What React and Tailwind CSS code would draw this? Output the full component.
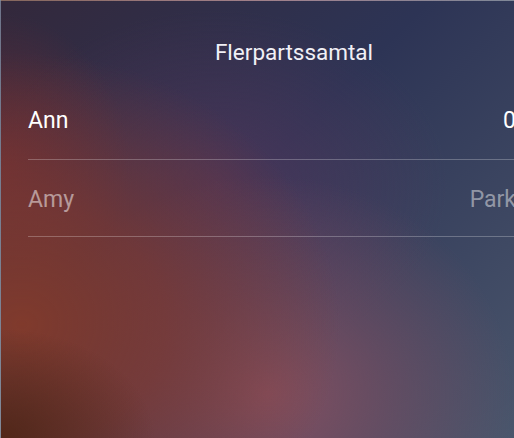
import React from "react";

export default function App() {
  const rows = [
    { id: 1, name: "Ann", value: "0", dim: false },
    { id: 2, name: "Amy", value: "Park", dim: true },
  ];

  return (
    <div
      className="relative w-[514px] h-[438px] overflow-hidden border-t border-l border-white/30 bg-[radial-gradient(ellipse_30%_25%_at_0%_100%,rgba(78,37,21,0.9)_0%,transparent_100%),radial-gradient(ellipse_62%_62%_at_4%_74%,rgba(128,58,44,1)_0%,rgba(125,56,48,0.75)_45%,transparent_100%),radial-gradient(ellipse_25%_35%_at_0%_38%,rgba(112,44,50,0.8)_0%,transparent_100%),radial-gradient(ellipse_48%_50%_at_52%_90%,rgba(136,80,96,0.95)_0%,rgba(130,78,96,0.5)_50%,transparent_100%),radial-gradient(ellipse_45%_40%_at_42%_42%,rgba(92,55,92,0.6)_0%,transparent_100%),linear-gradient(135deg,#33283b_0%,#2d3455_45%,#4a566c_100%)]"
      style={{ fontFamily: "Roboto, 'Noto Sans', sans-serif" }}
    >
      <div className="w-[586px]">
        <div className="h-[82px] pt-[22px] flex items-center justify-center">
          <h1 className="text-[22.5px] text-[#f1f0f6]">Flerpartssamtal</h1>
        </div>
        <div className="pl-[27px]">
          {rows.map((row) => (
            <div
              key={row.id}
              className={`h-[77px] flex items-center justify-between pr-[71px] border-b border-white/25 ${row.dim ? "pt-[4px]" : ""}`}
            >
              <span className={`text-[23px] ${row.dim ? "text-white/50" : "text-white"}`}>
                {row.name}
              </span>
              <span className={`text-[23px] ${row.dim ? "text-white/45" : "text-white"}`}>
                {row.value}
              </span>
            </div>
          ))}
        </div>
      </div>
    </div>
  );
}
